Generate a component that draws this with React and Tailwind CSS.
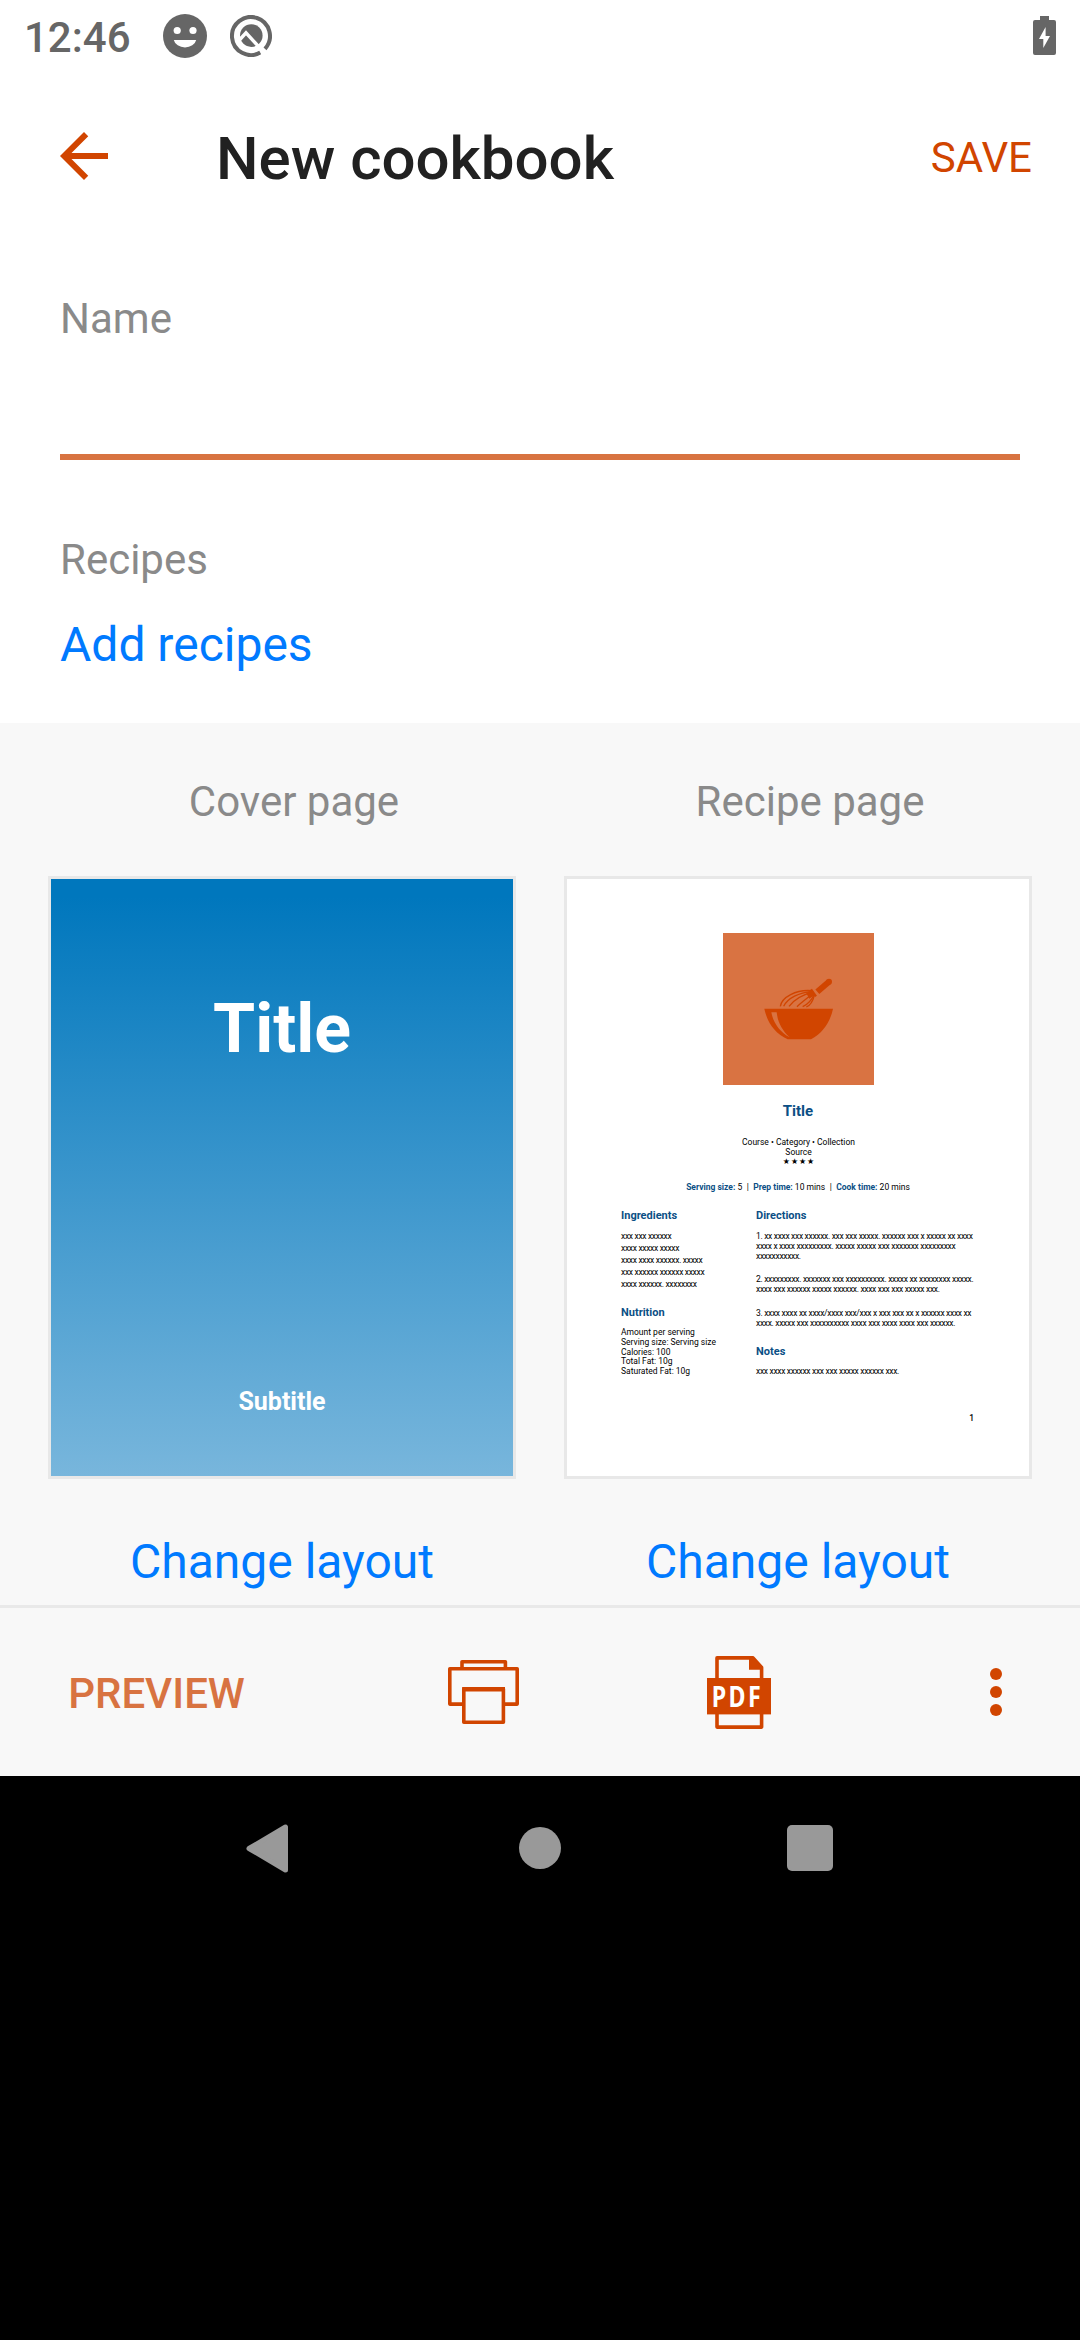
const ORANGE = "#d14500";

function StatusBar() {
  return (
    <div className="flex h-[75px] items-center pl-6 pr-6 text-[#666666]">
      <span className="w-[139px] text-[42px] leading-[50px] font-medium">12:46</span>
      <svg className="mb-[3px] h-11 w-11" viewBox="0 0 44 44" fill="currentColor">
        <circle cx="22" cy="22" r="22" />
        <circle cx="14.2" cy="16.5" r="3.6" fill="#fff" />
        <circle cx="30" cy="16.5" r="3.6" fill="#fff" />
        <path d="M10.8 26 H33.2 A11.4 9.2 0 0 1 10.8 26 Z" fill="#fff" />
      </svg>
      <svg className="mb-[3px] ml-[23px] h-[42px] w-[42px]" viewBox="0 0 42 42" fill="none">
        <path d="M30.2 37.6 A19 19 0 1 1 35 33.8" stroke="currentColor" strokeWidth="4" />
        <circle cx="21.3" cy="20.6" r="11.3" fill="currentColor" />
        <path d="M9 25.5 L16 17.8 L34 37.5" stroke="#fff" strokeWidth="3.4" />
      </svg>
      <svg className="mb-1 ml-auto h-[39px] w-[23px]" viewBox="0 0 23 39" fill="currentColor">
        <path d="M7 0 H16 V4 H21 Q23 4 23 6 V37 Q23 39 21 39 H2 Q0 39 0 37 V6 Q0 4 2 4 H7 Z" />
        <path d="M12.6 11 L6 23 H10.3 V32 L17 20 H12.6 Z" fill="#fff" />
      </svg>
    </div>
  );
}

function Header() {
  return (
    <header className="flex h-[167px] items-center pl-12 pr-12">
      <svg className="mb-[5px] h-[72px] w-[72px]" viewBox="0 0 24 24" fill={ORANGE}>
        <path d="M20 11H7.83l5.59-5.59L12 4l-8 8 8 8 1.41-1.41L7.83 13H20v-2z" />
      </svg>
      <h1 className="ml-24 text-[60px] leading-[70px] font-medium text-[#212121]">New cookbook</h1>
      <button className="mb-[2px] ml-auto text-[42px] leading-[50px] text-[#d14500]">SAVE</button>
    </header>
  );
}

function CoverPreview() {
  return (
    <div className="flex h-[603px] flex-col items-center border-[3px] border-[#e8e8e8] bg-[linear-gradient(to_bottom,#0077bd_3%,#78b6dc)] font-bold text-white">
      <div className="mt-[110px] text-[68px] leading-[80px]">Title</div>
      <div className="mt-auto mb-[59px] text-[25px] leading-[30px]">Subtitle</div>
    </div>
  );
}

function BowlIcon() {
  return (
    <svg className="mt-[54px] h-[152px] w-[151px]" viewBox="486 189 453 456">
      <rect x="486" y="189" width="453" height="456" fill="#d97342" />
      <path d="M610 416 H816 C808 455 785 490 750 508 H680 C640 490 618 455 610 416 Z" fill={ORANGE} />
      <path d="M631 427 L647 427 C650 455 662 480 686 502 C656 486 636 457 631 427 Z" fill="#d97342" />
      <path d="M769 365 L804 335" stroke={ORANGE} strokeWidth="18" />
      <circle cx="804" cy="335" r="9" fill={ORANGE} />
      <path d="M750 358 L765 379" stroke={ORANGE} strokeWidth="7" />
      <g fill="none" stroke={ORANGE} strokeWidth="4">
        <path d="M752 362 C705 358 662 382 658 409" />
        <path d="M752 364 C715 368 680 384 668 409" />
        <path d="M753 367 C725 374 700 388 684 409" />
        <path d="M756 370 C742 382 722 396 708 410" />
        <path d="M759 374 C752 390 742 402 725 410" />
        <path d="M760 376 C756 392 748 406 736 411" />
      </g>
      <path d="M755 361 L735 368 L745 386 L761 375 Z" fill={ORANGE} />
    </svg>
  );
}

function Heading({ children }) {
  return <div className="text-[11px] leading-[14px] font-bold text-[#0b4f85]">{children}</div>;
}

function Label({ children }) {
  return <b className="font-bold text-[#0b4f85]">{children}</b>;
}

const ingredients = [
  "xxx xxx xxxxxx",
  "xxxx xxxxx xxxxx",
  "xxxx xxxx xxxxxx. xxxxx",
  "xxx xxxxxx xxxxxx xxxxx",
  "xxxx xxxxxx. xxxxxxxx",
];

const nutrition = [
  "Amount per serving",
  "Serving size: Serving size",
  "Calories: 100",
  "Total Fat: 10g",
  "Saturated Fat: 10g",
];

function RecipePreview() {
  return (
    <div className="flex h-[603px] flex-col items-center border-[3px] border-[#e8e8e8] bg-white text-[8.5px] leading-[10px] whitespace-nowrap text-black">
      <BowlIcon />
      <div className="mt-4 text-[15px] leading-[20px] font-bold text-[#0b4f85]">Title</div>
      <div className="mt-4 pl-px">Course • Category • Collection</div>
      <div className="pl-px">Source</div>
      <div className="pl-[2px] font-['DejaVu_Sans'] text-[8px] tracking-[0.9px] text-black">★★★★</div>
      <div className="mt-[15px] flex gap-[4.5px]">
        <span><Label>Serving size:</Label> 5</span>
        <span>|</span>
        <span><Label>Prep time:</Label> 10 mins</span>
        <span>|</span>
        <span><Label>Cook time:</Label> 20 mins</span>
      </div>
      <div className="mt-[17px] flex w-full pl-[54px]">
        <div className="w-[135px]">
          <Heading>Ingredients</Heading>
          <div className="mt-[7px] leading-[12px] tracking-[-0.32px]">
            {ingredients.map((t) => <div key={t}>{t}</div>)}
          </div>
          <div className="mt-[16px]"><Heading>Nutrition</Heading></div>
          <div className="mt-[8px] leading-[9.8px]">
            {nutrition.map((t) => <div key={t}>{t}</div>)}
          </div>
        </div>
        <div>
          <Heading>Directions</Heading>
          <div className="mt-2 tracking-[-0.32px]">
            <div>1. xx xxxx xxx xxxxxx. xxx xxx xxxxx. xxxxxx xxx x xxxxx xx xxxx</div>
            <div>xxxx x xxxx xxxxxxxxx. xxxxx xxxxx xxx xxxxxxx xxxxxxxxx</div>
            <div>xxxxxxxxxxx.</div>
            <div className="mt-[13px]">2. xxxxxxxxx. xxxxxxx xxx xxxxxxxxxx. xxxxx xx xxxxxxxx xxxxx.</div>
            <div>xxxx xxx xxxxxx xxxxx xxxxxx. xxxx xxx xxx xxxxx xxx.</div>
            <div className="mt-[14px]">3. xxxx xxxx xx xxxx/xxxx xxx/xxx x xxx xxx xx x xxxxxx xxxx xx</div>
            <div>xxxx. xxxxx xxx xxxxxxxxxx xxxx xxx xxxx xxxx xxx xxxxxx.</div>
          </div>
          <div className="mt-[17px]"><Heading>Notes</Heading></div>
          <div className="mt-[7px] tracking-[-0.32px]">xxx xxxx xxxxxx xxx xxx xxxxx xxxxxx xxx.</div>
        </div>
      </div>
      <div className="mt-[36px] w-full pr-[55px] text-right font-medium">1</div>
    </div>
  );
}

function LayoutColumn({ label, children }) {
  return (
    <div className="flex w-[468px] flex-col">
      <div className="mb-[49px] pl-6 text-center text-[42px] leading-[50px] text-[#8a8a8a]">{label}</div>
      {children}
      <button className="mt-[55px] text-[48px] leading-[56px] text-[#007aff]">Change layout</button>
    </div>
  );
}

function Toolbar() {
  return (
    <div className="flex h-[171px] items-center border-t-[3px] border-[#e9e9e9] bg-[#f8f8f8]">
      <button className="mt-[3px] ml-[68px] w-[177px] text-[42px] leading-[50px] font-medium text-[#d87341]">PREVIEW</button>
      <svg className="ml-[203px] h-[64px] w-[71px]" viewBox="0 0 71 64" fill="none" stroke={ORANGE} strokeWidth="3.6" strokeLinejoin="round">
        <path d="M14 9 V1.8 H57.4 V9" />
        <path d="M15.5 44.1 H1.8 V8.8 H69.2 V44.1 H55.5" />
        <rect x="15.8" y="28.9" width="39.6" height="33.3" />
        <path d="M14.2 29.2 H57" strokeWidth="4.4" />
      </svg>
      <div className="relative ml-[188px] h-[73px] w-[64px]">
        <svg className="h-[73px] w-[64px]" viewBox="0 0 64 73">
          <path d="M10 1.9 H46 L54.6 11.5 V71.1 H10 Z" fill="none" stroke={ORANGE} strokeWidth="3.6" strokeLinejoin="round" />
          <path d="M42 1 H46 L55.8 11 V13.8 H42 Z" fill={ORANGE} />
          <rect y="22" width="64" height="36.4" fill={ORANGE} />
        </svg>
        <span className="absolute top-[20px] left-0 w-[80px] origin-left scale-x-[0.8] pl-[6px] font-['Noto_Sans'] text-[29px] leading-[40px] font-bold tracking-[3px] text-white">PDF</span>
      </div>
      <div className="ml-[219px] flex flex-col gap-[6px]">
        <span className="h-3 w-3 rounded-full bg-[#d14500]" />
        <span className="h-3 w-3 rounded-full bg-[#d14500]" />
        <span className="h-3 w-3 rounded-full bg-[#d14500]" />
      </div>
    </div>
  );
}

function NavigationBar() {
  return (
    <nav className="flex h-36 items-center">
      <svg className="ml-[246px] h-[49px] w-[42px]" viewBox="0 0 42 49">
        <path d="M3 24.5 L39.5 3 V46 Z" fill="#999" stroke="#999" strokeWidth="5" strokeLinejoin="round" />
      </svg>
      <span className="ml-[231px] h-[42px] w-[42px] rounded-full bg-[#999]" />
      <span className="ml-[226px] h-[46px] w-[46px] rounded-[5px] bg-[#999]" />
    </nav>
  );
}

export default function App() {
  return (
    <div className="h-[2340px] w-[1080px] overflow-hidden bg-black font-['Roboto',sans-serif]">
      <div className="h-[723px] bg-white">
        <StatusBar />
        <Header />
        <div className="px-[60px] pt-[52px]">
          <div className="text-[42px] leading-[50px] text-[#8a8a8a]">Name</div>
          <div className="mt-[110px] h-[6px] bg-[#d87341]" />
          <div className="mt-[75px] text-[42px] leading-[50px] text-[#8a8a8a]">Recipes</div>
          <button className="mt-8 block text-[48px] leading-[56px] text-[#007aff]">Add recipes</button>
        </div>
      </div>
      <div className="flex h-[882px] justify-between bg-[#f8f8f8] px-12 pt-[54px]">
        <LayoutColumn label="Cover page"><CoverPreview /></LayoutColumn>
        <LayoutColumn label="Recipe page"><RecipePreview /></LayoutColumn>
      </div>
      <Toolbar />
      <NavigationBar />
    </div>
  );
}
